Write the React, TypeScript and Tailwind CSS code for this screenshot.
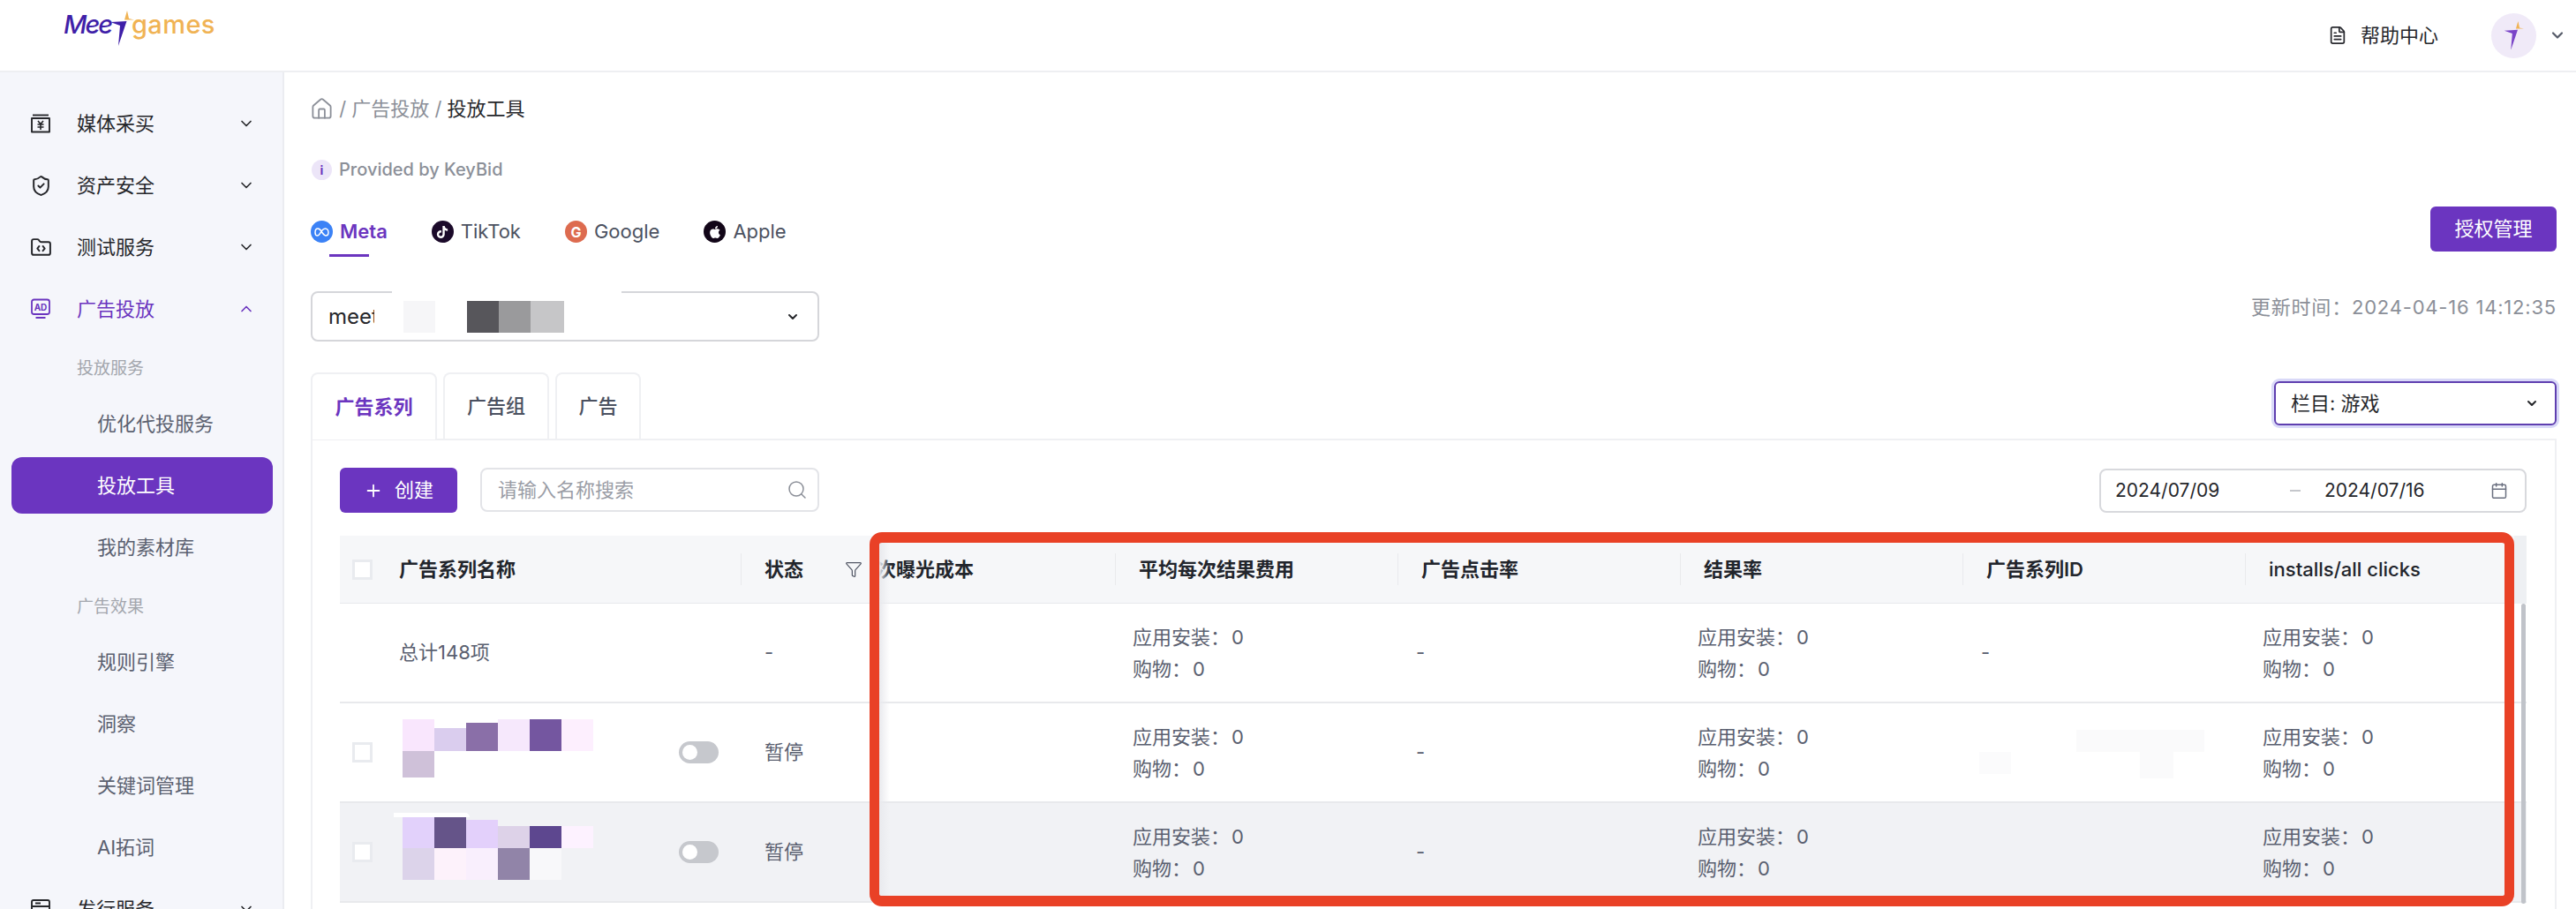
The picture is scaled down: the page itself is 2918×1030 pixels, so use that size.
import React from "react";
import {
  ChevronDown,
  ChevronUp,
  ShieldCheck,
  FolderCode,
  Home,
  Search,
  Plus,
  Funnel,
  Calendar,
  FileText,
} from "lucide-react";
import { FaApple, FaTiktok } from "react-icons/fa";

const YenBox = () => (
  <svg width="24" height="24" viewBox="0 0 24 24" fill="none" stroke="currentColor" strokeWidth="1.9">
    <path d="M2 6V21.5H22V6Z" strokeLinejoin="round" />
    <path d="M3 2.5H21" />
    <path d="M9 9l3 3.5 3-3.5M8.5 13h7M8.5 16h7M12 12.5V19" strokeWidth="1.6" />
  </svg>
);

const AdIcon = () => (
  <svg width="24" height="24" viewBox="0 0 24 24" fill="none" stroke="currentColor" strokeWidth="1.8">
    <rect x="2" y="1.5" width="20" height="16.5" rx="2.5" />
    <path d="M6.5 22H17.5" strokeWidth="2" />
    <text x="12" y="14" textAnchor="middle" fontSize="10" fontWeight="700" fill="currentColor" stroke="none" fontFamily="Inter, sans-serif">
      AD
    </text>
  </svg>
);

const ServerIcon = () => (
  <svg width="24" height="24" viewBox="0 0 24 24" fill="none" stroke="currentColor" strokeWidth="1.9">
    <rect x="2" y="2" width="20" height="20" rx="2" />
    <path d="M2 9H22M6 5.5H12" />
  </svg>
);

const Nav = ({ icon, label, open, active }: { icon: React.ReactNode; label: string; open?: boolean; active?: boolean }) => (
  <div className={`flex h-[64px] shrink-0 items-center pl-[34px] pr-[31px] text-[22px] ${active ? "text-[#6b35bf]" : "text-[#26272b]"}`}>
    <span className="flex w-[53px] shrink-0">{icon}</span>
    <span className="flex-1">{label}</span>
    {open ? <ChevronUp size={20} strokeWidth={2} /> : <ChevronDown size={20} strokeWidth={2} />}
  </div>
);

const Sub = ({ label, active }: { label: string; active?: boolean }) => (
  <div className={`ml-[13px] mr-[11px] flex h-[64px] shrink-0 items-center rounded-[12px] pl-[97px] text-[22px] ${active ? "bg-[#6b35c0] text-white" : "text-[#5b6170]"}`}>
    {label}
  </div>
);

const SectionLabel = ({ label }: { label: string }) => (
  <div className="flex h-[54px] shrink-0 items-start pl-[87px] pt-[16px] text-[19px] leading-[28px] text-[#a3a6ad]">{label}</div>
);

const Sidebar = () => (
  <aside className="flex h-full w-[322px] shrink-0 flex-col gap-[6px] overflow-hidden border-r-2 border-[#ebecf1] bg-[#f5f6fb] pt-[26px]">
    <Nav icon={<YenBox />} label="媒体采买" />
    <Nav icon={<ShieldCheck size={25} strokeWidth={1.9} />} label="资产安全" />
    <Nav icon={<FolderCode size={25} strokeWidth={1.9} />} label="测试服务" />
    <Nav icon={<AdIcon />} label="广告投放" open active />
    <SectionLabel label="投放服务" />
    <Sub label="优化代投服务" />
    <Sub label="投放工具" active />
    <Sub label="我的素材库" />
    <SectionLabel label="广告效果" />
    <Sub label="规则引擎" />
    <Sub label="洞察" />
    <Sub label="关键词管理" />
    <Sub label="AI拓词" />
    <Nav icon={<ServerIcon />} label="发行服务" />
  </aside>
);

const Star = ({ scale = 1, bar = "#3f1fa8" }: { scale?: number; bar?: string }) => (
  <svg width={28 * scale} height={40 * scale} viewBox="0 0 28 40">
    <path d="M1 13L19.500 12L10 40L12 17Z" fill={bar} />
    <path d="M20 0L22 9L28 10.500L17 10.500Z" fill="#f0b354" />
  </svg>
);

const TopBar = () => (
  <header className="flex h-[82px] shrink-0 items-start justify-between border-b-2 border-[#eeeff2] bg-white">
    <div className="ml-[72px] mt-[12px] flex items-start text-[29px] font-medium leading-[30px]">
      <span className="mt-[1px] w-[52px] italic tracking-[-2px] text-[#3f1fa8]">Mee</span>
      <Star />
      <span className="-ml-[3px] mt-[1px] tracking-[0.4px] text-[#f0b354]">games</span>
    </div>
    <div className="mr-[11px] flex h-full items-center">
      <FileText size={22} strokeWidth={1.9} className="text-[#2a2b30]" />
      <span className="ml-[15px] text-[22px] text-[#26272b]">帮助中心</span>
      <span className="ml-[60px] flex h-[51px] w-[51px] items-center justify-center rounded-full bg-[#f0eaf8]">
        <Star scale={0.82} bar="#7a45c8" />
      </span>
      <ChevronDown size={20} strokeWidth={2.6} className="ml-[14px] text-[#555a68]" />
    </div>
  </header>
);

const PlatformTab = ({ icon, label, active }: { icon: React.ReactNode; label: string; active?: boolean }) => (
  <div className="flex flex-col items-center">
    <div className="flex h-[25px] items-center gap-[8px]">
      {icon}
      <span className={`text-[22px] leading-[25px] ${active ? "font-semibold text-[#6b35bf]" : "text-[#4b5160]"}`}>{label}</span>
    </div>
    <span className={`mt-[13px] h-[3px] w-[45px] ${active ? "bg-[#6b35bf]" : ""}`} />
  </div>
);

const Circle = ({ className, children }: { className: string; children: React.ReactNode }) => (
  <span className={`flex h-[25px] w-[25px] items-center justify-center rounded-full text-white ${className}`}>{children}</span>
);

type Block = [string, number?];

const Blocks = ({ rows, arc }: { rows: [number, Block[]][]; arc?: boolean }) => (
  <div className="relative flex flex-col">
    {arc && <span className="absolute -left-[10px] -top-[4px] h-[5px] w-[86px] rounded-tr-full bg-white" />}
    {rows.map(([h, blocks], i) => (
      <div key={i} className="flex items-end" style={{ height: h }}>
        {blocks.map(([c, bh], j) => (
          <span key={j} className="block w-[36px]" style={{ height: bh ?? h, background: c }} />
        ))}
      </div>
    ))}
  </div>
);

const HeadCell = ({ label, medium, children }: { label: string; medium?: boolean; children?: React.ReactNode }) => (
  <div className="flex h-[76px] items-center bg-[#f6f7f9]">
    <span className="h-[36px] w-[1px] shrink-0 bg-[#e9eaed]" />
    <span className={`ml-[26px] whitespace-nowrap text-[22px] text-[#22252c] ${medium ? "font-medium" : "font-semibold"}`}>{label}</span>
    {children}
  </div>
);

const Metric = () => (
  <div className="flex h-full flex-col justify-center pl-[20px] text-[22px] leading-[36px] text-[#5a6070]">
    <span>
      应用安装：<span className="ml-[2px]">0</span>
    </span>
    <span>
      购物：<span className="ml-[2px]">0</span>
    </span>
  </div>
);

const Dash = () => <div className="flex h-full items-center pl-[21px] text-[22px] text-[#5a6070]">-</div>;

const Check = () => <span className="block h-[23px] w-[23px] shrink-0 border-[3px] border-[#e9ebef] bg-white" />;

const Toggle = () => (
  <span className="ml-auto mr-[25px] flex h-[25px] w-[45px] shrink-0 items-center rounded-full bg-[#c6c8cd] pl-[4px]">
    <span className="h-[17px] w-[17px] rounded-full bg-white" />
  </span>
);

const Status = () => <div className="flex h-full items-center pl-[27px] text-[22px] text-[#5a6070]">暂停</div>;

const Row = ({ rows, shade, blobs }: { rows: [number, Block[]][]; shade?: boolean; blobs?: boolean }) => {
  const bg = shade ? "bg-[#f1f2f5]" : "bg-white";
  return (
    <div className={`grid h-[113px] grid-cols-[454px_146px_278px_320px_320px_320px_320px_319px] border-b-2 border-[#e8e9ec] ${bg}`}>
      <div className="flex items-center pl-[14px]">
        <Check />
        <span className="ml-[34px] -mt-[9px]">
          <Blocks rows={rows} arc={shade} />
        </span>
        <Toggle />
      </div>
      <Status />
      <div />
      <Metric />
      <Dash />
      <Metric />
      <div className="relative">
        {blobs && (
          <>
            <span className="absolute left-[129px] top-[30px] h-[25px] w-[145px] bg-[#fafafb]" />
            <span className="absolute left-[201px] top-[55px] h-[30px] w-[38px] bg-[#fafafb]" />
            <span className="absolute left-[19px] top-[55px] h-[25px] w-[36px] bg-[#fbfbfc]" />
          </>
        )}
      </div>
      <Metric />
    </div>
  );
};

const Table = () => (
  <div className="relative mt-[26px] w-[2477px]">
    <div className="grid h-[77px] grid-cols-[454px_146px_278px_320px_320px_320px_320px_319px] border-b-2 border-[#e8e9ec]">
      <div className="flex h-[76px] items-center bg-[#f6f7f9] pl-[14px]">
        <Check />
        <span className="ml-[30px] text-[22px] font-semibold text-[#22252c]">广告系列名称</span>
      </div>
      <HeadCell label="状态">
        <Funnel size={20} strokeWidth={1.5} className="ml-[47px] text-[#555a68]" />
      </HeadCell>
      <div className="flex h-[76px] items-center bg-[#f6f7f9] pl-[8px] text-[22px] font-semibold text-[#22252c]">次曝光成本</div>
      <HeadCell label="平均每次结果费用" />
      <HeadCell label="广告点击率" />
      <HeadCell label="结果率" />
      <HeadCell label="广告系列ID" />
      <HeadCell label="installs/all clicks" medium />
    </div>

    <div className="grid h-[113px] grid-cols-[454px_146px_278px_320px_320px_320px_320px_319px] border-b-2 border-[#e8e9ec] bg-white">
      <div className="flex items-center pl-[67px] text-[22px] text-[#5a6070]">总计148项</div>
      <div className="flex items-center pl-[27px] text-[22px] text-[#5a6070]">-</div>
      <div />
      <Metric />
      <Dash />
      <Metric />
      <Dash />
      <Metric />
    </div>

    <Row
      blobs
      rows={[
        [36, [["#f9e6fd"], ["#dacdee", 26], ["#8a6fa8", 32], ["#f6e8fc"], ["#7456a0"], ["#fdeffe"]]],
        [30, [["#cfc1d9"]]],
      ]}
    />
    <Row
      shade
      rows={[
        [36, [["#e2d1fb"], ["#655489"], ["#e3d0fb", 32], ["#ddd2e8", 25], ["#5d478f", 25], ["#fdf2ff", 25]]],
        [36, [["#dcd3ea"], ["#fdf2fb"], ["#f9effd"], ["#9184a8"], ["#f8f8fa"]]],
      ]}
    />

    {/* scrollbar */}
    <span className="absolute right-[1px] top-[77px] h-[340px] w-[5px] rounded-full bg-[#c0c3c9]" />
    <span className="absolute right-0 top-0 h-[77px] w-[14px] bg-[#eef0f3]" />
    {/* scroll shadow beside the fixed columns */}
    <span className="absolute left-[611px] top-[8px] h-[412px] w-[12px] bg-gradient-to-r from-[#e9eaee] to-transparent" />
    {/* annotation */}
    <div className="pointer-events-none absolute -top-[4px] left-[600px] right-[14px] h-[424px] rounded-[14px] border-x-[11px] border-y-[12px] border-[#e94126]" />
  </div>
);

export default function App() {
  return (
    <div className="flex h-[1030px] w-[2918px] flex-col overflow-hidden bg-white font-[Inter,'Noto_Sans_CJK_SC',sans-serif]">
      <TopBar />
      <div className="flex min-h-0 flex-1">
        <Sidebar />
        <main className="flex min-w-0 flex-1 flex-col pl-[30px] pr-[22px]">
          <div className="mt-[27px] flex h-[28px] items-center text-[22px] text-[#8b8f98]">
            <Home size={27} strokeWidth={1.6} className="-ml-[1px]" />
            <span>&nbsp;/&nbsp;广告投放&nbsp;/&nbsp;</span>
            <span className="text-[#26272b]">投放工具</span>
          </div>

          <div className="mt-[41px] flex h-[28px] items-center text-[20px] font-medium text-[#8b8f98]">
            <span className="ml-[1px] flex h-[23px] w-[23px] items-center justify-center rounded-full bg-[#ece5f8] text-[14px] font-bold text-[#6b35bf]">i</span>
            <span className="ml-[8px]">Provided by KeyBid</span>
          </div>

          <div className="mt-[28px] flex h-[51px] items-start justify-between">
            <div className="flex gap-[50px] pt-[16px]">
              <PlatformTab
                active
                label="Meta"
                icon={
                  <Circle className="bg-[#3b82f6]">
                    <svg width="17" height="10" viewBox="0 0 17 10" fill="none" stroke="white" strokeWidth="1.5">
                      <path d="M8.5 5C7 2 5.5 1 4 1 2 1 1 3 1 5.5S2 9 3.5 9C5.500 9 7 6 8.500 3.500 10 1.500 11 1 12.500 1 14.500 1 16 3 16 5.500S14.500 9 13 9C11.500 9 10 7 8.500 5Z" />
                    </svg>
                  </Circle>
                }
              />
              <PlatformTab
                label="TikTok"
                icon={
                  <Circle className="bg-[#1b0a2a]">
                    <FaTiktok size={14} />
                  </Circle>
                }
              />
              <PlatformTab
                label="Google"
                icon={
                  <Circle className="bg-[#dd6b4f] text-[16px] font-bold">
                    <span className="leading-none">G</span>
                  </Circle>
                }
              />
              <PlatformTab
                label="Apple"
                icon={
                  <Circle className="bg-[#120618]">
                    <FaApple size={16} />
                  </Circle>
                }
              />
            </div>
            <button className="h-[51px] w-[143px] rounded-[6px] bg-[#6b35c0] text-[22px] text-white">授权管理</button>
          </div>

          <div className="mt-[45px] flex h-[57px] items-start justify-between">
            <div className="relative flex h-[57px] w-[576px] items-center rounded-[8px] border-2 border-[#d5d6da] bg-white pl-[18px] pr-[20px]">
              <span className="w-[52px] overflow-hidden text-[24px] text-[#26272b]">meet</span>
              <span className="ml-[33px] h-[36px] w-[36px] bg-[#f6f6f8]" />
              <span className="ml-[36px] h-[36px] w-[36px] bg-[#57565b]" />
              <span className="h-[36px] w-[36px] bg-[#9a9a9c]" />
              <span className="h-[36px] w-[38px] bg-[#c6c6c8]" />
              <ChevronDown size={16} strokeWidth={3} className="ml-auto text-[#26272b]" />
              <span className="absolute -top-[2px] left-[90px] h-[3px] w-[260px] bg-white" />
            </div>
            <span className="mt-[3px] text-[22px] leading-[30px] tracking-[0.8px] text-[#8b8f98]">更新时间：2024-04-16 14:12:35</span>
          </div>

          <div className="mt-[35px] flex h-[75px] items-start justify-between">
            <div className="flex h-[76px] gap-[7px]">
              <div className="relative z-10 flex w-[143px] items-center justify-center rounded-t-[8px] border-2 border-b-0 border-[#eff0f3] bg-white text-[22px] font-semibold text-[#6b35bf]">
                广告系列
              </div>
              <div className="flex h-[75px] w-[120px] items-center justify-center rounded-t-[8px] border-2 border-b-0 border-[#eff0f3] text-[22px] font-medium text-[#4b5160]">
                广告组
              </div>
              <div className="flex h-[75px] w-[97px] items-center justify-center rounded-t-[8px] border-2 border-b-0 border-[#eff0f3] text-[22px] font-medium text-[#4b5160]">
                广告
              </div>
            </div>
            <div className="mt-[10px] flex h-[50px] w-[320px] items-center justify-between rounded-[6px] border-2 border-[#5f3fb0] pl-[17px] pr-[18px] text-[22px] text-[#26272b] shadow-[0_0_0_3px_#d9d9f8]">
              <span>栏目: 游戏</span>
              <ChevronDown size={16} strokeWidth={3} />
            </div>
          </div>

          <section className="flex-1 border-2 border-b-0 border-[#eff0f3] pl-[31px] pt-[31px]">
            <div className="flex h-[51px] w-[2477px] items-start justify-between">
              <div className="flex items-start gap-[26px]">
                <button className="flex h-[51px] w-[133px] items-center justify-center gap-[13px] rounded-[6px] bg-[#6b35c0] text-[22px] text-white">
                  <Plus size={22} strokeWidth={2} />
                  创建
                </button>
                <div className="flex h-[50px] w-[384px] items-center justify-between rounded-[8px] border-2 border-[#e3e4e8] pl-[18px] pr-[11px] text-[22px] text-[#9a9da6]">
                  <span>请输入名称搜索</span>
                  <Search size={24} strokeWidth={1.5} className="text-[#8b8f98]" />
                </div>
              </div>
              <div className="mt-[1px] flex h-[50px] w-[484px] items-center rounded-[8px] border-2 border-[#d8d9dd] pl-[16px] pr-[19px] text-[21px] text-[#26272b]">
                <span className="w-[198px]">2024/07/09</span>
                <span className="h-[2px] w-[12px] bg-[#c5c7cc]" />
                <span className="ml-[27px]">2024/07/16</span>
                <Calendar size={20} strokeWidth={1.8} className="ml-auto text-[#6b7080]" />
              </div>
            </div>
            <Table />
          </section>
        </main>
      </div>
    </div>
  );
}
